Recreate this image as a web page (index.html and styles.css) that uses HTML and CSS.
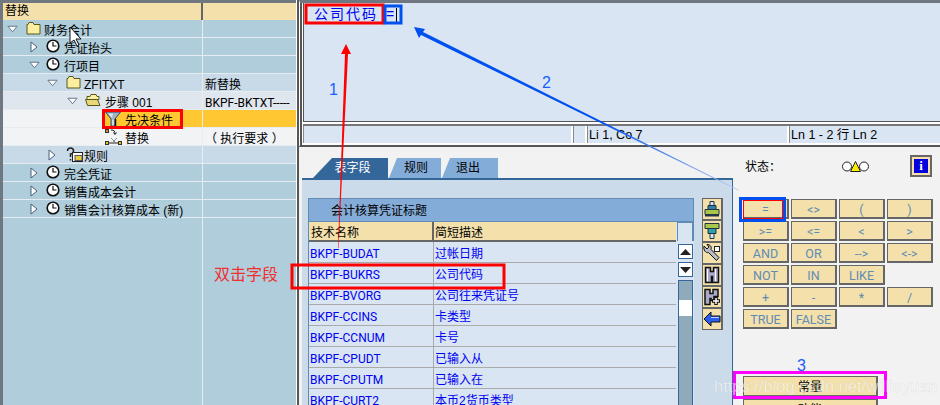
FILE: index.html
```html
<!DOCTYPE html>
<html lang="zh">
<head>
<meta charset="utf-8">
<title>替换</title>
<link rel="stylesheet" href="styles.css">
</head>
<body>
<svg class="defs" width="0" height="0">
  <defs>
    <symbol id="down" viewBox="0 0 12 8"><path d="M1 1h10L6 7z" fill="#fff" stroke="#5a6f80"/></symbol>
    <symbol id="right" viewBox="0 0 8 12"><path d="M1 1v10l6-5z" fill="#fff" stroke="#4a5f80"/></symbol>
    <symbol id="clock" viewBox="0 0 14 14"><circle cx="7" cy="7" r="5.8" fill="#fff" stroke="#111" stroke-width="1.6"/><path d="M7 3v4h3.5" fill="none" stroke="#111" stroke-width="1.2"/></symbol>
    <symbol id="folder" viewBox="0 0 15 14"><path d="M1 3.500h1l1-2h4l1 2h6v9.500H1z" fill="#fbeea0" stroke="#54581f"/></symbol>
    <symbol id="open" viewBox="0 0 16 14"><path d="M2 3.500h3l1-2h5l1 2h2v3H2z" fill="#fbeea0" stroke="#54581f"/><path d="M.5 6.500h12l2.500 6H2.500z" fill="#e9d778" stroke="#54581f"/></symbol>
    <symbol id="funnel" viewBox="0 0 16 16"><path d="M.5 1h15L10 8v7H6V8z" fill="#9fb2c4" stroke="#33475a"/><path d="M3 2.500h5L7 7z" fill="#dbe5ee"/><path d="M10.500 8v7.500" stroke="#111" stroke-width="1.500"/><path d="M7.500 8.500h1v6h-1z" fill="#fff"/></symbol>
    <symbol id="subst" viewBox="0 0 17 17"><rect x=".5" y=".5" width="3" height="3" fill="#e98b1d" stroke="#333"/><rect x=".5" y="12.500" width="3" height="3" fill="#e8c020" stroke="#333"/><rect x="13.500" y="12.500" width="3" height="3" fill="#e8c020" stroke="#333"/><path d="M6 1c3 0 4 1 4 4M8.500 3.500 10 5.500l1.500-2M4 14h9" fill="none" stroke="#222"/><path d="M6 9l6 6M12 9l-6 6" stroke="#8d8d8d"/></symbol>
    <symbol id="rule" viewBox="0 0 18 16"><path d="M1.500 4a3 3 0 1 1 3 3v3M4.500 12v1.500" fill="none" stroke="#222" stroke-width="1.500"/><rect x="6.500" y="5.500" width="10" height="9" fill="#fff" stroke="#222"/><rect x="9" y="8.500" width="7" height="5" fill="#e6cc3a" stroke="#556"/></symbol>
  </defs>
</svg>

<div class="app">
  <section class="tree">
    <div class="row head"><div class="name">替换</div><div class="val"></div></div>
    <div class="row l0 teal"><div class="name"><svg class="exp"><use href="#down" width="11" height="8" x="0" y="4"/></svg><svg class="ico"><use href="#folder" width="15" height="14"/></svg>财务会计</div><div class="val"></div></div>
    <div class="row l1 teal"><div class="name"><svg class="exp"><use href="#right" width="8" height="12" x="1" y="2"/></svg><svg class="ico"><use href="#clock" width="14" height="14"/></svg>凭证抬头</div><div class="val"></div></div>
    <div class="row l1 teal"><div class="name"><svg class="exp"><use href="#down" width="11" height="8" x="0" y="4"/></svg><svg class="ico"><use href="#clock" width="14" height="14"/></svg>行项目</div><div class="val"></div></div>
    <div class="row l2 pale"><div class="name"><svg class="exp"><use href="#down" width="11" height="8" x="0" y="4"/></svg><svg class="ico"><use href="#folder" width="15" height="14"/></svg>ZFITXT</div><div class="val">新替换</div></div>
    <div class="row l3 grey"><div class="name"><svg class="exp"><use href="#down" width="11" height="8" x="0" y="4"/></svg><svg class="ico wide"><use href="#open" width="16" height="14"/></svg>步骤 001</div><div class="val tight">BKPF-BKTXT-----</div></div>
    <div class="row l4 sel"><div class="name"><svg class="ico"><use href="#funnel" width="16" height="16"/></svg>先决条件</div><div class="val"></div></div>
    <div class="row l4 plain"><div class="name"><svg class="ico"><use href="#subst" width="17" height="17"/></svg>替换</div><div class="val">（ 执行要求 ）</div></div>
    <div class="row l2 pale"><div class="name"><svg class="exp"><use href="#right" width="8" height="12" x="1" y="2"/></svg><svg class="ico"><use href="#rule" width="18" height="16"/></svg>规则</div><div class="val"></div></div>
    <div class="row l1 teal"><div class="name"><svg class="exp"><use href="#right" width="8" height="12" x="1" y="2"/></svg><svg class="ico"><use href="#clock" width="14" height="14"/></svg>完全凭证</div><div class="val"></div></div>
    <div class="row l1 teal"><div class="name"><svg class="exp"><use href="#right" width="8" height="12" x="1" y="2"/></svg><svg class="ico"><use href="#clock" width="14" height="14"/></svg>销售成本会计</div><div class="val"></div></div>
    <div class="row l1 teal"><div class="name"><svg class="exp"><use href="#right" width="8" height="12" x="1" y="2"/></svg><svg class="ico"><use href="#clock" width="14" height="14"/></svg>销售会计核算成本 (新)</div><div class="val"></div></div>
    <div class="row teal fill"><div class="name"></div><div class="val"></div></div>
  </section>

  <main class="work">
    <section class="editor">
      <div class="editor-in">
        <div class="code"><span class="code-text">公司代码</span><span class="code-op">=</span><span class="caret"></span></div>
        <div class="status">
          <div class="cell c1"></div><div class="cell c2"></div>
          <div class="cell c3">Li 1, Co 7</div><div class="cell c4">Ln 1 - 2 行 Ln 2</div>
        </div>
      </div>
    </section>

    <section class="builder">
      <div class="fields">
        <div class="tabs">
          <div class="tab on">表字段</div><div class="tab">规则</div><div class="tab last">退出</div>
        </div>
        <div class="panel">
          <div class="tbl">
            <div class="tbl-title">会计核算凭证标题</div>
            <div class="tbl-body">
              <div class="rows">
                <div class="tr th"><div>技术名称</div><div>简短描述</div></div>
                <div class="tr"><div>BKPF-BUDAT</div><div>过帐日期</div></div>
                <div class="tr"><div>BKPF-BUKRS</div><div>公司代码</div></div>
                <div class="tr"><div>BKPF-BVORG</div><div>公司往来凭证号</div></div>
                <div class="tr"><div>BKPF-CCINS</div><div>卡类型</div></div>
                <div class="tr"><div>BKPF-CCNUM</div><div>卡号</div></div>
                <div class="tr"><div>BKPF-CPUDT</div><div>已输入从</div></div>
                <div class="tr"><div>BKPF-CPUTM</div><div>已输入在</div></div>
                <div class="tr"><div>BKPF-CURT2</div><div>本币2货币类型</div></div>
              </div>
              <div class="scroll">
                <div class="corner"></div>
                <div class="sbtn"><svg width="11" height="6"><path d="M5.500 0 11 6H0z" fill="#222"/></svg></div>
                <div class="sbtn"><svg width="11" height="6"><path d="M0 0h11L5.500 6z" fill="#222"/></svg></div>
                <div class="track"><div class="thumb"></div></div>
              </div>
            </div>
          </div>
          <div class="tools">
            <div class="tool"><svg width="18" height="18"><path d="M7 1.500h4v4H7z" fill="#d8e4f0" stroke="#234"/><path d="M5 5.500h8v4H5z" fill="#2f7fa8" stroke="#234"/><path d="M2 9.500h14v5H2z" fill="#a8c64a" stroke="#234"/><path d="M2 15.500h14" stroke="#234" stroke-width="2"/></svg></div>
            <div class="tool"><svg width="18" height="18"><path d="M2 1.500h14v5H2z" fill="#a8c64a" stroke="#234"/><path d="M5 6.500h8v5H5z" fill="#2fa0a8" stroke="#234"/><path d="M7 11.500h4v5H7z" fill="#d8e4f0" stroke="#234"/></svg></div>
            <div class="tool"><svg width="18" height="18"><path d="M1 2l3 3 2-2-2-2.500c3 0 5 2 4 5l8 8-2.500 3-8-8C3 9.500 0 6 1 2z" fill="#b6bcc8" stroke="#111"/><rect x="11.500" y="2.500" width="5" height="5" fill="#fff" stroke="#222"/></svg></div>
            <div class="tool"><svg width="18" height="18"><path d="M2.500 1.500h5v4h3v-4h5v15h-6v-6h-1v6h-6z" fill="#a9a9c9" stroke="#111" stroke-width="1.500"/><path d="M4.500 3v12M12.500 3v12" stroke="#fff"/></svg></div>
            <div class="tool"><svg width="18" height="18"><path d="M2 1.500h5v4h3v-4h5v7h-4v4H8v-2H7v6H2z" fill="#a9a9c9" stroke="#111" stroke-width="1.500"/><path d="M13 9v8M9 13h8" stroke="#111" stroke-width="3.500"/><path d="M13 10v6M10 13h6" stroke="#fff" stroke-width="1.500"/></svg></div>
            <div class="tool"><svg width="18" height="18"><path d="M1 9l7-7v4h9v6H8v4z" fill="#2b5cf0" stroke="#111"/><path d="M8 7h8v1H8z" fill="#bcd2ff"/></svg></div>
          </div>
        </div>
      </div>

      <div class="ops">
        <div class="state">
          <span class="state-label">状态：</span>
          <svg class="lights" width="29" height="11"><circle cx="6" cy="5.500" r="4.500" fill="#fff" stroke="#222"/><circle cx="23" cy="5.500" r="4.500" fill="#fff" stroke="#222"/><path d="M14.500 .5l5 10h-10z" fill="#ffee00" stroke="#222"/></svg>
          <div class="info"><span class="info-i">i</span></div>
        </div>
        <div class="keys">
          <div class="key">=</div><div class="key">&lt;&gt;</div><div class="key">(</div><div class="key">)</div>
          <div class="key">&gt;=</div><div class="key">&lt;=</div><div class="key">&lt;</div><div class="key">&gt;</div>
          <div class="key">AND</div><div class="key">OR</div><div class="key">--&gt;</div><div class="key">&lt;-&gt;</div>
          <div class="key">NOT</div><div class="key">IN</div><div class="key">LIKE</div><div class="blank"></div>
          <div class="key">+</div><div class="key">-</div><div class="key">*</div><div class="key">/</div>
          <div class="key">TRUE</div><div class="key">FALSE</div>
        </div>
        <div class="big">常量</div>
        <div class="big">功能</div>
      </div>
    </section>
  </main>
</div>

<svg class="marks" width="940" height="405">
  <defs>
    <linearGradient id="fade" gradientUnits="userSpaceOnUse" x1="600" y1="0" x2="740" y2="0">
      <stop offset="0" stop-color="#0050f0"/><stop offset="1" stop-color="#b8c8f0"/>
    </linearGradient>
  </defs>
  <g fill="none" stroke-width="3">
    <rect x="103.500" y="110.500" width="78" height="17" stroke="#f00"/>
    <rect x="306" y="5" width="77" height="18" stroke="#f00"/>
    <rect x="385" y="6" width="16" height="17" stroke="#0050f0"/>
    <rect x="292" y="265" width="212" height="23" stroke="#f00"/>
    <rect x="743.500" y="200.500" width="39" height="18" stroke="#f00" stroke-width="1"/>
    <rect x="740.500" y="198.500" width="44" height="22" stroke="#0050f0"/>
    <rect x="734.500" y="372.500" width="151" height="25" stroke="#f0f"/>
  </g>
  <path d="M346 44l5 10h-3l-9.500 194-.5 0 7-194h-4z" fill="#f00"/>
  <path d="M414 27l11 2-2 3 316 158-.5.500L421 35l-2 3z" fill="url(#fade)"/>
  <path d="M70 27v16l4-3 3 6 2-1-3-6h5z" fill="#fff" stroke="#111"/>
  <text class="note blue" x="329" y="95">1</text>
  <text class="note blue" x="542" y="88">2</text>
  <text class="note blue" x="797" y="371">3</text>
  <text class="note red" x="214" y="280">双击字段</text>
  <text class="wm" x="714" y="392">https://blog.csdn.net/willieyuan</text>
</svg>
</body>
</html>
```
FILE: styles.css
```css
* { box-sizing: border-box; }
html, body { margin: 0; padding: 0; }
body {
  width: 940px; height: 405px; overflow: hidden; position: relative;
  background: #f2f2f2; color: #000;
  font: 12px/18px "Liberation Sans", "Noto Sans CJK SC", sans-serif;
}
.defs { position: absolute; }
.app { display: flex; height: 405px; }

/* tree */
.tree {
  width: 297px; flex: none; display: flex; flex-direction: column;
  padding: 3px 0 0 3px; background: #afcddb;
  box-shadow: inset 3px 3px 0 #6f7880;
  border-right: 1px solid #fff;
}
.row { display: flex; height: 18px; flex: none; border-bottom: 1px solid #e6edf2; }
.name { width: 200px; flex: none; display: flex; align-items: center; white-space: nowrap; border-right: 1px solid #e6edf2; padding-top: 5px; line-height: 13px; }
.val { flex: 1; padding: 5px 0 0 2px; line-height: 13px; white-space: nowrap; overflow: visible; }
.tight { font-family: Roboto, sans-serif; }
.head { background: #f3e0ab; height: 17px; border-bottom: 0; }
.head .name { border-right: 2px solid #666; padding: 0 0 0 2px; line-height: 17px; }
.teal { background: #afcddb; }
.pale { background: #c8d9e8; }
.grey { background: #dfe6ed; }
.sel, .plain { background: #f2f3f5; }
.sel .val { background: #ffc832; }
.sel .name { background: linear-gradient(to right, #f2f3f5 102px, #ffc832 102px); }
.fill { flex: 1; border-bottom: 0; }
.exp { width: 18px; height: 16px; flex: none; margin-top: -4px; }
.ico { width: 18px; height: 17px; flex: none; margin-top: -4px; }
.wide { width: 20px; }
.l0 .name { padding-left: 4px; }
.l0 .exp { width: 19px; }
.l1 .name { padding-left: 26px; }
.l1 .exp { width: 17px; }
.l2 .name { padding-left: 44px; }
.l2 .exp { width: 19px; }
.l3 .name { padding-left: 64px; }
.l4 .name { padding-left: 102px; }
.l4 .ico { width: 20px; }

/* right */
.work { flex: 1; min-width: 0; display: flex; flex-direction: column; border-left: 2px solid #555; }
.editor { flex: none; height: 147px; border-top: 3px solid #6f7880; border-bottom: 2px solid #555; border-left: 1px solid #fff; background: #fff; display: flex; }
.editor-in { flex: 1; min-width: 0; border-left: 2px solid #555; padding-left: 1px; display: flex; flex-direction: column; }
.code {
  height: 119px; flex: none; background: #d9e5f3; border: 1px solid #555; border-width: 0 0 1px 1px;
  display: flex; align-items: flex-start; padding: 1px 0 0 10px; color: #0000f0; font-size: 14px; line-height: 20px;
}
.code-text { letter-spacing: 2px; width: 72px; }
.caret { width: 1px; height: 14px; background: #000; margin: 4px 0 0 2px; }
.status { display: flex; gap: 2px; margin-top: 2px; height: 20px; border-top: 2px solid #777; background: #fff; }
.cell { background: #d9e5f3; height: 17px; border-left: 1px solid #888; padding-left: 1px; line-height: 18px; font-size: 12.500px; white-space: nowrap; }
.c1 { width: 268px; }
.c2 { width: 12px; }
.c3 { width: 200px; }
.c4 { flex: 1; }

.builder { flex: 1; min-height: 0; display: flex; background: #f2f2f2; }
.fields { width: 434px; flex: none; padding: 11px 0 0 3px; }
.tabs { display: flex; height: 20px; padding-left: 11px; gap: 1px; }
.tab {
  width: 52px; height: 20px; background: #84acd8; text-align: center; line-height: 21px; padding-left: 2px;
  clip-path: polygon(8px 0, 100% 0, 100% 100%, 0 100%);
}
.tab.last { width: 56px; padding: 0 4px 0 0; }
.tab.on { width: 75px; background: #336699; color: #fff; padding-left: 4px; clip-path: polygon(19px 0, 100% 0, 100% 100%, 0 100%); }
.panel { height: 227px; background: #cbdbea; border-top: 2px solid #336699; border-right: 1px solid #336699; padding: 18px 0 0 6px; display: flex; gap: 8px; }
.tbl { width: 386px; flex: none; }
.tbl-title { height: 24px; background: #84acd8; border: 1px solid #5f8bb5; padding-left: 22px; line-height: 25px; }
.tbl-body { display: flex; background: #d9e5f3; height: 184px; border-left: 1px solid #5f8bb5; }
.rows { width: 367px; flex: none; }
.tr { display: grid; grid-template-columns: 125px 241px; grid-template-rows: 20px; height: 21px; color: #0000f0; border-bottom: 1px solid #aaa; white-space: nowrap; }
.tr > div { padding: 3px 0 0 1px; line-height: 19px; border-right: 1px solid #aaa; }
.tr > div:first-child { font-family: Roboto, sans-serif; }
.tr > div + div { border-right: 0; }
.th { color: #000; height: 20px; grid-template-rows: 18px; background: #f3e0ab; border-bottom: 2px solid #666; }
.th > div { border-right: 2px solid #666; padding: 3px 0 0 2px; line-height: 17px; }
.th > div:first-child { font-family: "Liberation Sans", "Noto Sans CJK SC", sans-serif; }
.th > div + div { padding-left: 1px; }
.scroll { width: 17px; display: flex; flex-direction: column; gap: 3px; margin-left: 1px; }
.corner { height: 19px; flex: none; width: 17px; background: #d9e5f3; border: 1px solid #5f8bb5; border-width: 1px 2px 0 1px; }
.sbtn { height: 15px; width: 15px; margin-left: 1px; background: #fff; border: 1px solid #336699; display: flex; align-items: center; justify-content: center; flex: none; }
.track { flex: 1; width: 15px; margin-left: 1px; background: #8faabb; border: 1px solid #336699; padding-top: 19px; }
.thumb { height: 16px; background: #fff; }
.tools { width: 21px; height: 132px; flex: none; background: #666; padding: 1px 2px 0 1px; display: flex; flex-direction: column; gap: 2px; }
.tool { height: 20px; flex: none; background: #f3e0ab; display: flex; align-items: center; justify-content: center; }

.ops { flex: 1; padding-left: 10px; }
.state { height: 52px; position: relative; display: flex; align-items: flex-start; padding: 11px 0 0 2px; }
.state-label { width: 96px; }
.lights { margin-top: 3px; }
.info { position: absolute; left: 167px; top: 8px; width: 22px; height: 22px; background: #f3e0ab; border: 2px solid #666; padding: 1px; }
.info-i { display: block; width: 14px; height: 14px; margin: 1px; background: #0000e0; color: #fff; font: bold 13px/14px "Liberation Serif", serif; text-align: center; }
.keys { display: grid; grid-template-columns: repeat(4, 46px); grid-auto-rows: 20px; gap: 2px; }
.key, .big { background: #f3e0ab; border: 1px solid #666; border-width: 1px 2px 2px 1px; text-align: center; color: #5f8bb5; font-family: Roboto, sans-serif; font-size: 12.500px; line-height: 19px; }
.big { width: 135px; height: 21px; color: #000; font: 12px/20px "Liberation Sans", "Noto Sans CJK SC", sans-serif; margin-top: 2px; }
.keys + .big { margin-top: 47px; }

/* overlays */
.marks { position: absolute; left: 0; top: 0; pointer-events: none; }
.note { font: 16px "Liberation Sans", "Noto Sans CJK SC", sans-serif; }
.blue { fill: #1a5cff; }
.red { fill: #f03030; }
.wm { font: 16.500px "Liberation Sans", sans-serif; fill: #fff; fill-opacity: .62; stroke: #8a8a8a; stroke-opacity: .25; stroke-width: .4; }
```
